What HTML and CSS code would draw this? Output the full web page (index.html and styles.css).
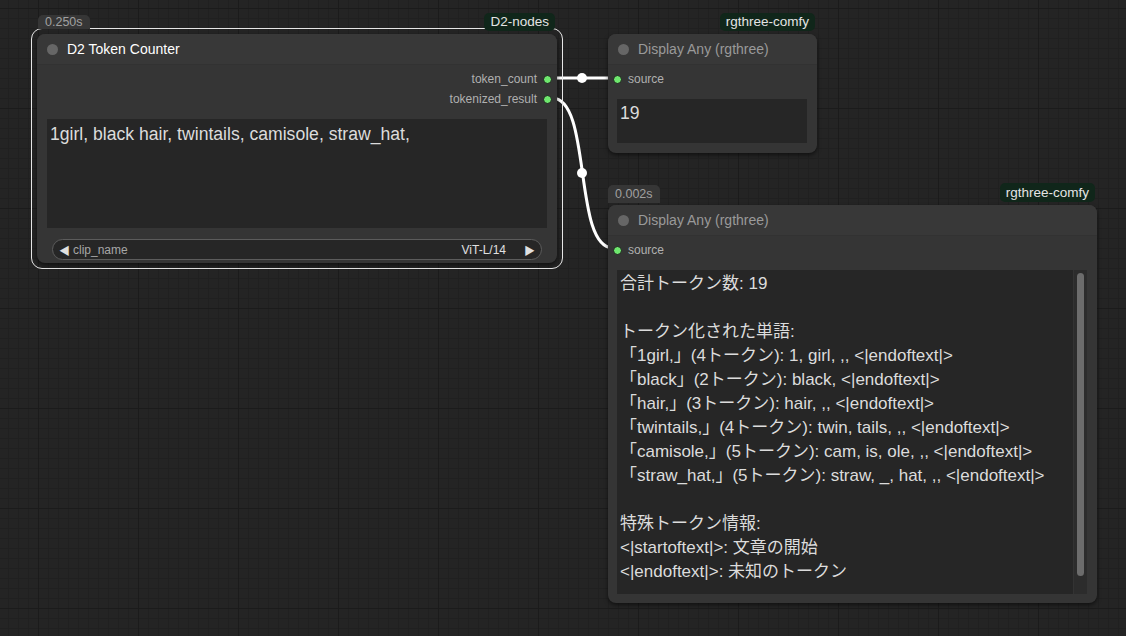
FILE: index.html
```html
<!DOCTYPE html>
<html>
<head>
<meta charset="utf-8">
<link rel="stylesheet" href="styles.css">
</head>
<body>
<div class="canvas">
  <svg class="links" width="1126" height="636" viewBox="0 0 1126 636">
    <path d="M552 78 L613 78" stroke="#fff" stroke-width="3" fill="none"/>
    <circle cx="582" cy="78" r="5" fill="#fff"/>
    <path d="M552 98 C592.5 98 572.5 248 613 248" stroke="#fff" stroke-width="3" fill="none"/>
    <circle cx="582" cy="173" r="5" fill="#fff"/>
  </svg>

  <div class="selection"></div>

  <div class="node node-counter">
    <div class="badge badge-time badge-time-sel">0.250s</div>
    <div class="badge badge-pack">D2-nodes</div>
    <div class="title">
      <span class="title-dot"></span>
      <span class="title-text title-active">D2 Token Counter</span>
    </div>
    <div class="body">
      <div class="slots">
        <div class="slot slot-out"><span class="slot-label">token_count</span><span class="slot-dot"></span></div>
        <div class="slot slot-out"><span class="slot-label">tokenized_result</span><span class="slot-dot"></span></div>
      </div>
      <div class="textbox prompt">1girl, black hair, twintails, camisole, straw_hat,</div>
      <div class="combo">
        <span class="combo-arrow">◀</span>
        <span class="combo-name">clip_name</span>
        <span class="combo-value">ViT-L/14</span>
        <span class="combo-arrow">▶</span>
      </div>
    </div>
  </div>

  <div class="node node-display1">
    <div class="badge badge-pack">rgthree-comfy</div>
    <div class="title">
      <span class="title-dot"></span>
      <span class="title-text">Display Any (rgthree)</span>
    </div>
    <div class="body">
      <div class="slot slot-in"><span class="slot-dot"></span><span class="slot-label">source</span></div>
      <div class="textbox display-small">19</div>
    </div>
  </div>

  <div class="node node-display2">
    <div class="badge badge-time">0.002s</div>
    <div class="badge badge-pack badge-pack-tall">rgthree-comfy</div>
    <div class="title">
      <span class="title-dot"></span>
      <span class="title-text">Display Any (rgthree)</span>
    </div>
    <div class="body">
      <div class="slot slot-in"><span class="slot-dot"></span><span class="slot-label">source</span></div>
      <div class="textbox display-large">
        <div class="display-text">
          <div class="line">合計トークン数: 19</div>
          <div class="line"></div>
          <div class="line">トークン化された単語:</div>
          <div class="line">「1girl,」(4トークン): 1, girl, ,, &lt;|endoftext|&gt;</div>
          <div class="line">「black」(2トークン): black, &lt;|endoftext|&gt;</div>
          <div class="line">「hair,」(3トークン): hair, ,, &lt;|endoftext|&gt;</div>
          <div class="line">「twintails,」(4トークン): twin, tails, ,, &lt;|endoftext|&gt;</div>
          <div class="line">「camisole,」(5トークン): cam, is, ole, ,, &lt;|endoftext|&gt;</div>
          <div class="line">「straw_hat,」(5トークン): straw, _, hat, ,, &lt;|endoftext|&gt;</div>
          <div class="line"></div>
          <div class="line">特殊トークン情報:</div>
          <div class="line">&lt;|startoftext|&gt;: 文章の開始</div>
          <div class="line">&lt;|endoftext|&gt;: 未知のトークン</div>
        </div>
        <div class="scrollbar"><div class="thumb"></div></div>
      </div>
    </div>
  </div>
</div>
</body>
</html>
```

FILE: styles.css
```css
html, body {
  margin: 0;
  padding: 0;
  width: 1126px;
  height: 636px;
  overflow: hidden;
}

.canvas {
  position: relative;
  width: 1126px;
  height: 636px;
  background-color: #242424;
  background-image:
    linear-gradient(to right, #1b1b1b 1px, transparent 1px),
    linear-gradient(to bottom, #1b1b1b 1px, transparent 1px),
    linear-gradient(to right, #202020 1px, transparent 1px),
    linear-gradient(to bottom, #202020 1px, transparent 1px);
  background-size: 100px 100px, 100px 100px, 10px 10px, 10px 10px;
  background-position: 38px 0, 0 8px, 8px 0, 0 8px;
  font-family: "Liberation Sans", "Noto Sans CJK JP", sans-serif;
}

.links {
  position: absolute;
  left: 0;
  top: 0;
}

.selection {
  position: absolute;
  left: 31px;
  top: 28px;
  width: 530px;
  height: 239px;
  border: 1px solid #e6e6e6;
  border-radius: 11px;
}

.node {
  position: absolute;
  background: #353535;
  border-radius: 8px;
  box-shadow: 0 2px 4px rgba(0, 0, 0, 0.55);
  display: flex;
  flex-direction: column;
}

.node-counter { left: 37px; top: 34px; width: 520px; height: 229px; }
.node-display1 { left: 608px; top: 34px; width: 209px; height: 119px; }
.node-display2 { left: 608px; top: 205px; width: 489px; height: 398px; }

.badge {
  position: absolute;
  box-sizing: border-box;
  white-space: nowrap;
}

.badge-time {
  left: 0;
  top: -20px;
  height: 18px;
  line-height: 18px;
  padding: 0 7px;
  font-size: 12.5px;
  color: #a0a0a0;
  background: #363636;
  border-radius: 5px 5px 0 0;
}

.badge-time-sel {
  left: 1px;
  top: -19px;
  height: 14px;
  line-height: 15px;
}

.badge-pack {
  right: 2px;
  top: -21px;
  height: 18px;
  line-height: 18px;
  padding: 0 6px;
  font-size: 13.5px;
  color: #e4e4e4;
  background: #10261a;
  border-radius: 5px;
}

.badge-pack-tall {
  top: -22px;
  height: 19px;
  line-height: 19px;
}

.title {
  height: 30px;
  flex: none;
  display: flex;
  align-items: center;
  padding-left: 10px;
  background: #383838;
  border-radius: 8px 8px 0 0;
  border-bottom: 1px solid #323232;
}

.title-dot {
  width: 11px;
  height: 11px;
  border-radius: 50%;
  background: #666;
  margin-right: 9px;
}

.title-text {
  font-size: 14px;
  color: #9a9a9a;
}

.title-active {
  color: #fff;
}

.body {
  display: flex;
  flex-direction: column;
  padding-top: 4px;
}

.slots {
  display: flex;
  flex-direction: column;
}

.slot {
  height: 20px;
  display: flex;
  align-items: center;
  font-size: 12px;
  color: #b0b0b0;
}

.slot-out {
  justify-content: flex-end;
  padding-right: 5px;
}

.slot-out .slot-label { margin-right: 6px; }

.slot-in {
  padding-left: 5px;
}

.slot-in .slot-label { margin-left: 6px; }

.slot-dot {
  width: 7px;
  height: 7px;
  border-radius: 50%;
  background: #6ee86e;
  border: 1px solid #1d1d1d;
}

.textbox {
  background: #262626;
  color: #dcdcdc;
  box-sizing: border-box;
}

.prompt {
  margin: 10px 10px 0 10px;
  height: 109px;
  padding: 3px 3px;
  font-size: 17.6px;
  line-height: 24px;
}

.combo {
  margin: 11px 15px 0 15px;
  height: 21px;
  box-sizing: border-box;
  border: 1px solid #5c5c5c;
  border-radius: 11px;
  background: #262626;
  display: flex;
  align-items: center;
  padding: 0 6px;
  font-size: 12px;
}

.combo-arrow {
  color: #e0e0e0;
  font-size: 11px;
}

.combo-name {
  color: #a6a6a6;
  margin-left: 3px;
  flex: 1;
}

.combo-value {
  color: #e0e0e0;
  margin-right: 18px;
}

.display-small {
  margin: 10px 10px 0 9px;
  height: 44px;
  padding: 2px 3px;
  font-size: 17.6px;
  line-height: 24px;
}

.display-large {
  margin: 10px 10px 0 9px;
  height: 324px;
  display: flex;
}

.display-text {
  flex: 1;
  padding: 2px 3px;
  font-size: 17px;
  line-height: 24px;
  white-space: nowrap;
}

.line {
  height: 24px;
}

.scrollbar {
  width: 14px;
  background: #2c2c2c;
  border-left: 1px solid #333;
  padding: 3px 3px 18px 3px;
  box-sizing: border-box;
  display: flex;
}

.thumb {
  flex: 1;
  background: #6c6c6c;
  border-radius: 4px;
}
```
